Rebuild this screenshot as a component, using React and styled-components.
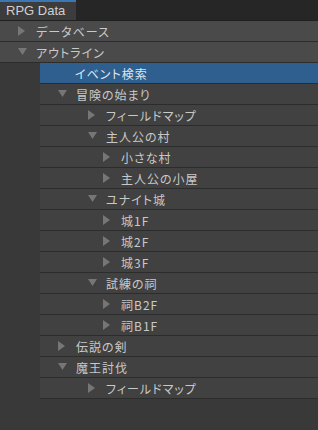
import React from 'react';
import styled, { createGlobalStyle } from 'styled-components';

const GlobalStyle = createGlobalStyle`
  body {
    margin: 0;
    background: #393939;
    font-family: "Noto Sans CJK JP", "Noto Sans", sans-serif;
  }
`;

const Panel = styled.div`
  width: 318px;
  height: 430px;
  background: #393939;
  overflow: hidden;
`;

const TabBar = styled.div`
  height: 20px;
  display: flex;
  background: #262626;
  border-bottom: 1px solid #202020;
`;

const Tab = styled.div`
  width: 76px;
  box-sizing: border-box;
  border-top: 2px solid #3a77b4;
  background: #3c3c3c;
  color: #d0d0d0;
  font-family: "Liberation Sans", Arial, sans-serif;
  font-size: 13px;
  line-height: 18px;
  padding-left: 6px;
`;

const Nested = styled.div`
  margin-left: 40px;
`;

const Row = styled.div`
  height: 20px;
  border-bottom: 1px solid #2c2c2c;
  background: ${p => (p.$selected ? '#2e5f8f' : p.$top ? '#4a4a4a' : '#414141')};
  color: ${p => (p.$selected ? '#dde6ef' : '#c9c9c9')};
  display: flex;
  align-items: center;
  padding-left: ${p => p.$indent}px;
  font-size: 12px;
  font-feature-settings: "palt";
  letter-spacing: 1px;
  white-space: nowrap;
`;

const Toggle = styled.span`
  width: 18px;
  flex: none;
  display: flex;
  align-items: center;
`;

const Label = styled.span`
  line-height: 20px;
  padding-top: 1px;
`;

function Arrow({ open }) {
  return open ? (
    <svg width="9" height="8" viewBox="0 0 9 8">
      <polygon points="0,0 9,0 4.5,7" fill="#767676" />
    </svg>
  ) : (
    <svg width="8" height="10" viewBox="0 0 8 10">
      <polygon points="0,0 7,5 0,10" fill="#767676" />
    </svg>
  );
}

function Item({ label, indent, open, leaf, top, selected }) {
  return (
    <Row $indent={indent} $top={top} $selected={selected}>
      {!leaf && (
        <Toggle>
          <Arrow open={open} />
        </Toggle>
      )}
      <Label>{label}</Label>
    </Row>
  );
}

const tree = [
  { label: '冒険の始まり', indent: 18, open: true },
  { label: 'フィールドマップ', indent: 48 },
  { label: '主人公の村', indent: 48, open: true },
  { label: '小さな村', indent: 63 },
  { label: '主人公の小屋', indent: 63 },
  { label: 'ユナイト城', indent: 48, open: true },
  { label: '城1F', indent: 63 },
  { label: '城2F', indent: 63 },
  { label: '城3F', indent: 63 },
  { label: '試練の祠', indent: 48, open: true },
  { label: '祠B2F', indent: 63 },
  { label: '祠B1F', indent: 63 },
  { label: '伝説の剣', indent: 18 },
  { label: '魔王討伐', indent: 18, open: true },
  { label: 'フィールドマップ', indent: 48 },
];

export default function App() {
  return (
    <Panel>
      <GlobalStyle />
      <TabBar>
        <Tab>RPG Data</Tab>
      </TabBar>
      <Item label="データベース" indent={18} top />
      <Item label="アウトライン" indent={18} open top />
      <Nested>
        <Item label="イベント検索" indent={35} leaf selected />
        {tree.map((n, i) => (
          <Item key={i} {...n} />
        ))}
      </Nested>
    </Panel>
  );
}
